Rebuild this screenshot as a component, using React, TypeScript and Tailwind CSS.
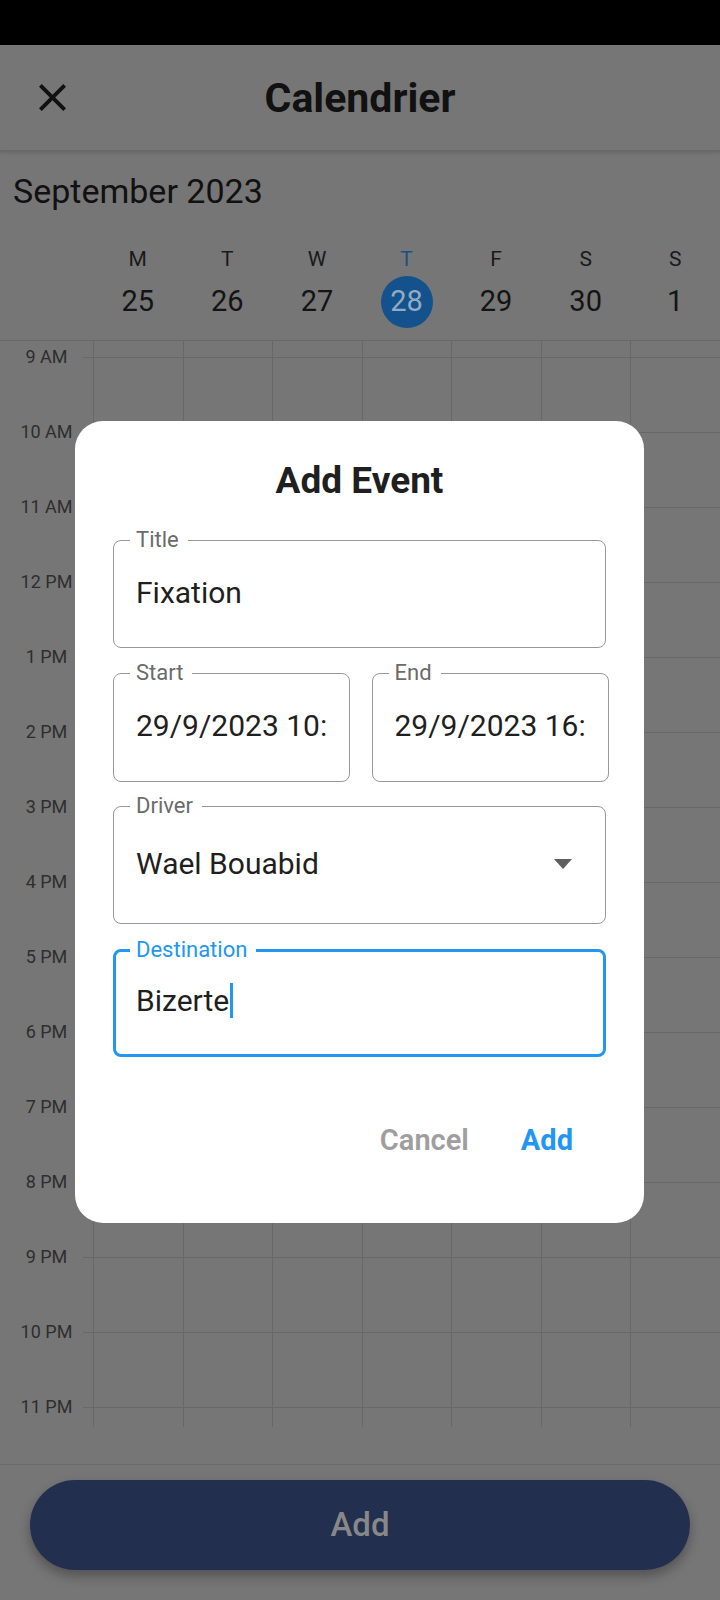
const days = [
  { l: "M", n: "25" },
  { l: "T", n: "26" },
  { l: "W", n: "27" },
  { l: "T", n: "28", today: true },
  { l: "F", n: "29" },
  { l: "S", n: "30" },
  { l: "S", n: "1" },
];

const hours = [
  "9 AM",
  "10 AM",
  "11 AM",
  "12 PM",
  "1 PM",
  "2 PM",
  "3 PM",
  "4 PM",
  "5 PM",
  "6 PM",
  "7 PM",
  "8 PM",
  "9 PM",
  "10 PM",
  "11 PM",
];

const App = () => {
  return (
    <div className="relative w-[720px] h-[1600px] overflow-hidden bg-[#767676] font-[Roboto,sans-serif]">
      {/* status bar */}
      <div className="h-[45px] bg-black" />

      {/* app bar */}
      <div className="grid h-[106px] grid-cols-[1fr_auto_1fr] items-center border-b border-[#686868] shadow-[0_2px_3px_rgba(0,0,0,0.12)]">
        <div className="pl-[39px]">
          <svg width="27" height="27" viewBox="5 5 14 14" fill="#111111">
            <path d="M19 6.41L17.59 5 12 10.59 6.41 5 5 6.41 10.59 12 5 17.59 6.41 19 12 13.41 17.59 19 19 17.59 13.41 12z" />
          </svg>
        </div>
        <div className="text-[41px] leading-[48px] font-bold text-[#111111]">Calendrier</div>
        <div />
      </div>

      {/* month + days header */}
      <div className="border-b border-[#686868] pt-[21px] pb-[12px]">
        <div className="pl-[13px] text-[34px] leading-[38px] text-[#111111]">September 2023</div>
        <div className="mt-[37px] flex">
          <div className="w-[93px]" />
          {days.map((d, i) => (
            <div key={i} className="flex flex-1 flex-col items-center">
              <div
                className={
                  d.today
                    ? "text-[21px] leading-[24px] text-[#1d4f80]"
                    : "text-[21px] leading-[24px] text-[#1a1a1a]"
                }
              >
                {d.l}
              </div>
              <div
                className={
                  d.today
                    ? "mt-[5px] flex h-[52px] w-[52px] items-center justify-center rounded-full bg-[#13528c] text-[29px] text-[#93abc2]"
                    : "mt-[5px] flex h-[52px] w-[52px] items-center justify-center text-[29px] text-[#141414]"
                }
              >
                {d.n}
              </div>
            </div>
          ))}
        </div>
      </div>

      {/* time grid */}
      <div className="flex flex-col">
        <div className="flex h-[16px]">
          <div className="w-[93px]" />
          {days.map((_, i) => (
            <div key={i} className="flex-1 border-l border-[#686868]" />
          ))}
        </div>
        {hours.map((h, i) => (
          <div key={h} className={i === hours.length - 1 ? "flex h-[20px]" : "flex h-[75px]"}>
            <div className="flex w-[93px]">
              <div className="w-[83px] pl-[10px] text-center">
                <div className="-translate-y-1/2 text-[18px] leading-[22px] text-[#2e2e2e]">{h}</div>
              </div>
              <div className="w-[10px] border-t border-[#686868]" />
            </div>
            {days.map((_, j) => (
              <div key={j} className="flex-1 border-l border-t border-[#686868]" />
            ))}
          </div>
        ))}
      </div>

      {/* bottom bar */}
      <div className="h-[38px] border-b border-[#6a6a6a]" />
      <div className="mx-[30px] mt-[15px] flex h-[90px] items-center justify-center rounded-full bg-[#222f4f] shadow-[0_6px_12px_rgba(0,0,0,0.3)]">
        <span className="text-[33px] font-medium text-[#888888]">Add</span>
      </div>

      {/* dialog */}
      <div className="absolute left-[75px] top-[421px] h-[802px] w-[569px] rounded-[28px] bg-white px-[38px] pt-[38px]">
        <div className="text-center text-[37px] leading-[44px] font-bold text-[#1f1f1f]">Add Event</div>

        <fieldset className="mt-[25px] h-[120px] rounded-[8px] border border-[#999999] px-[22px]">
          <legend className="-ml-[6px] pl-[6px] pr-[9px] text-[22px] leading-[24px] text-[#6b6b6b]">Title</legend>
          <div className="pt-[23px] text-[30px] leading-[36px] whitespace-nowrap text-[#1f1f1f]">Fixation</div>
        </fieldset>

        <div className="mt-[13px] grid grid-cols-2 gap-[24px]">
          <fieldset className="h-[121px] rounded-[8px] border border-[#999999] px-[22px]">
            <legend className="-ml-[6px] pl-[6px] pr-[9px] text-[22px] leading-[24px] text-[#6b6b6b]">Start</legend>
            <div className="pt-[23px] text-[30px] leading-[36px] whitespace-nowrap text-[#1f1f1f]">29/9/2023 10:</div>
          </fieldset>
          <fieldset className="h-[121px] rounded-[8px] border border-[#999999] px-[22px]">
            <legend className="-ml-[6px] pl-[6px] pr-[9px] text-[22px] leading-[24px] text-[#6b6b6b]">End</legend>
            <div className="pt-[23px] text-[30px] leading-[36px] whitespace-nowrap text-[#1f1f1f]">29/9/2023 16:</div>
          </fieldset>
        </div>

        <fieldset className="mt-[12px] h-[130px] rounded-[8px] border border-[#999999] px-[22px]">
          <legend className="-ml-[6px] pl-[6px] pr-[9px] text-[22px] leading-[24px] text-[#6b6b6b]">Driver</legend>
          <div className="flex items-center justify-between pt-[28px]">
            <span className="text-[30px] leading-[36px] whitespace-nowrap text-[#1f1f1f]">Wael Bouabid</span>
            <svg width="18" height="10" viewBox="0 0 18 10" className="mr-[11px]">
              <polygon points="0,0 18,0 9,10" fill="#5e5e5e" />
            </svg>
          </div>
        </fieldset>

        <fieldset className="mt-[14px] h-[119px] rounded-[8px] border-[3px] border-[#2196f3] px-[20px]">
          <legend className="-ml-[6px] pl-[6px] pr-[9px] text-[22px] leading-[24px] text-[#2196f3]">Destination</legend>
          <div className="flex items-start pt-[21px]">
            <span className="text-[30px] leading-[36px] whitespace-nowrap text-[#1f1f1f]">Bizerte</span>
            <span className="ml-[1px] h-[35px] w-[3px] bg-[#2196f3]" />
          </div>
        </fieldset>

        <div className="mt-[65px] flex justify-end gap-[52px] pr-[33px]">
          <span className="text-[29px] leading-[36px] font-semibold text-[#9e9e9e]">Cancel</span>
          <span className="text-[29px] leading-[36px] font-bold text-[#2196f3]">Add</span>
        </div>
      </div>
    </div>
  );
};

export default App;
